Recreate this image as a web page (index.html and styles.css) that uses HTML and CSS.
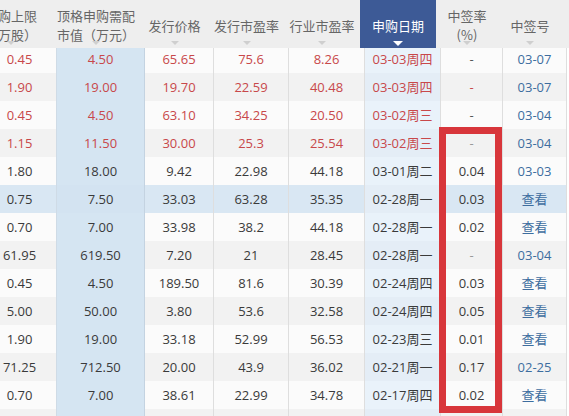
FILE: index.html
```html
<!DOCTYPE html>
<html lang="zh-CN">
<head>
<meta charset="utf-8">
<title>新股申购</title>
<link rel="stylesheet" href="styles.css">
</head>
<body>
<div class="viewport">
  <div class="table">
    <div class="thead-wrap">
      <div class="thead">
        <div class="th th-1"><span class="lbl">申购上限<br>（万股）</span><i class="arrow"></i></div>
        <div class="th th-2"><span class="lbl">顶格申购需配<br>市值（万元）</span><i class="arrow"></i></div>
        <div class="th"><span class="lbl">发行价格</span><i class="arrow"></i></div>
        <div class="th"><span class="lbl">发行市盈率</span><i class="arrow"></i></div>
        <div class="th"><span class="lbl">行业市盈率</span><i class="arrow"></i></div>
        <div class="th active"><span class="lbl">申购日期</span><i class="arrow"></i></div>
        <div class="th"><span class="lbl">中签率<br>(%)</span><i class="arrow"></i></div>
        <div class="th"><span class="lbl">中签号</span><i class="arrow"></i></div>
      </div>
    </div>
    <div class="tbody">
      <div class="row first red"><div class="td">0.45</div><div class="td">4.50</div><div class="td">65.65</div><div class="td">75.6</div><div class="td">8.26</div><div class="td">03-03周四</div><div class="td dash">-</div><div class="td link">03-07</div></div>
      <div class="row red"><div class="td">1.90</div><div class="td">19.00</div><div class="td">19.70</div><div class="td">22.59</div><div class="td">40.48</div><div class="td">03-03周四</div><div class="td">-</div><div class="td link">03-07</div></div>
      <div class="row red"><div class="td">0.45</div><div class="td">4.50</div><div class="td">63.10</div><div class="td">34.25</div><div class="td">20.50</div><div class="td">03-02周三</div><div class="td dash">-</div><div class="td link">03-04</div></div>
      <div class="row red"><div class="td">1.15</div><div class="td">11.50</div><div class="td">30.00</div><div class="td">25.3</div><div class="td">25.54</div><div class="td">03-02周三</div><div class="td dash light">-</div><div class="td link">03-04</div></div>
      <div class="row"><div class="td">1.80</div><div class="td">18.00</div><div class="td">9.42</div><div class="td">22.98</div><div class="td">44.18</div><div class="td">03-01周二</div><div class="td">0.04</div><div class="td link">03-03</div></div>
      <div class="row hover"><div class="td">0.75</div><div class="td">7.50</div><div class="td">33.03</div><div class="td">63.28</div><div class="td">35.35</div><div class="td">02-28周一</div><div class="td">0.03</div><div class="td link">查看</div></div>
      <div class="row"><div class="td">0.70</div><div class="td">7.00</div><div class="td">33.98</div><div class="td">38.2</div><div class="td">44.18</div><div class="td">02-28周一</div><div class="td">0.02</div><div class="td link">查看</div></div>
      <div class="row"><div class="td">61.95</div><div class="td">619.50</div><div class="td">7.20</div><div class="td">21</div><div class="td">28.45</div><div class="td">02-28周一</div><div class="td dash light">-</div><div class="td link">03-04</div></div>
      <div class="row"><div class="td">0.45</div><div class="td">4.50</div><div class="td">189.50</div><div class="td">81.6</div><div class="td">30.39</div><div class="td">02-24周四</div><div class="td">0.03</div><div class="td link">查看</div></div>
      <div class="row"><div class="td">5.00</div><div class="td">50.00</div><div class="td">3.80</div><div class="td">53.6</div><div class="td">32.58</div><div class="td">02-24周四</div><div class="td">0.05</div><div class="td link">查看</div></div>
      <div class="row"><div class="td">1.90</div><div class="td">19.00</div><div class="td">33.18</div><div class="td">52.99</div><div class="td">56.53</div><div class="td">02-23周三</div><div class="td">0.01</div><div class="td link">查看</div></div>
      <div class="row"><div class="td">71.25</div><div class="td">712.50</div><div class="td">20.00</div><div class="td">43.9</div><div class="td">36.02</div><div class="td">02-21周一</div><div class="td">0.17</div><div class="td link">02-25</div></div>
      <div class="row"><div class="td">0.70</div><div class="td">7.00</div><div class="td">38.61</div><div class="td">22.99</div><div class="td">34.78</div><div class="td">02-17周四</div><div class="td">0.02</div><div class="td link">查看</div></div>
      <div class="row"><div class="td"></div><div class="td"></div><div class="td"></div><div class="td"></div><div class="td"></div><div class="td"></div><div class="td"></div><div class="td"></div></div>
    </div>
  </div>
  <div class="mark"></div>
</div>
</body>
</html>
```
FILE: styles.css
```css
html, body {
  margin: 0;
  padding: 0;
  background: #ffffff;
}
.viewport {
  position: relative;
  width: 569px;
  height: 416px;
  overflow: hidden;
  font-family: "Open Sans", "Noto Sans CJK SC", sans-serif;
  font-size: 13px;
  color: #3a3a3a;
}
.table {
  margin-left: -17px;
  width: 584px;
}
.thead-wrap {
  background: #eeeeee;
  height: 48px;
  width: 600px;
}
.thead, .row {
  display: grid;
  grid-template-columns: 74px 88px 69px 75px 76px 76px 62px 64px;
}
.thead {
  margin-left: -5px;
  height: 48px;
}
.th {
  display: flex;
  flex-direction: column;
  align-items: center;
  padding-top: 5px;
  color: #666666;
  font-family: "Noto Sans CJK SC", "Open Sans", sans-serif;
  font-size: 13px;
  line-height: 19px;
}
.th-1 { padding-right: 8px; }
.th .lbl {
  height: 40px;
  display: flex;
  align-items: center;
  text-align: center;
}
.arrow {
  display: block;
  width: 0;
  height: 0;
  margin-top: -4px;
  border-left: 4px solid transparent;
  border-right: 4px solid transparent;
  border-top: 4px solid #cfcfcf;
}
.th.active {
  background: #3d5a96;
  color: #ffffff;
}
.th.active .arrow {
  border-left-width: 5px;
  border-right-width: 5px;
  border-top: 5px solid #ffffff;
}
.row {
  height: 28px;
}
.row.first {
  height: 25px;
}
.td {
  text-align: center;
  line-height: 28px;
  border-right: 1px solid #dedede;
  background: #fbfbfb;
  white-space: nowrap;
}
.row.first .td {
  line-height: 22px;
}
.row:nth-child(even) .td {
  background: #f2f2f2;
}
.row .td:nth-child(2) {
  background: #d5e5f2;
  border-right-color: #c4d3e1;
}
.row .td:nth-child(1) {
  border-right-color: #cfdbe6;
}
.row .td:nth-child(6) {
  background: #e9f2fa;
}
.row:nth-child(even) .td:nth-child(6) {
  background: #e4edf6;
}
.row.hover .td {
  background: #d9e7f3;
}
.row.hover .td:nth-child(2) {
  background: #d3e3f1;
}
.red .td {
  color: #c8484a;
}
.td.dash {
  color: #555555;
}
.td.dash.light {
  color: #999999;
}
.td.link, .red .td.link {
  color: #3d6d9f;
}
.mark {
  position: absolute;
  left: 439px;
  top: 127px;
  width: 63px;
  height: 286px;
  box-sizing: border-box;
  border: 7px solid #d8363b;
}
```
